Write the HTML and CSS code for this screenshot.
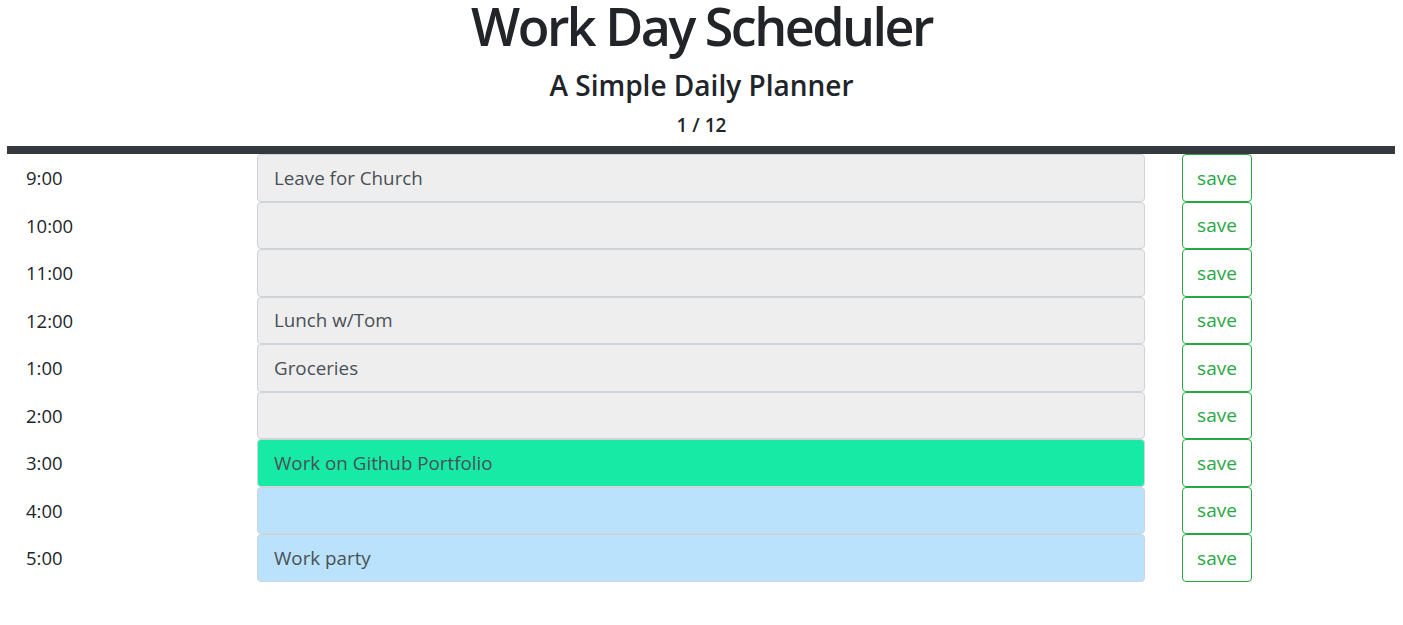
FILE: index.html
```html
<!DOCTYPE html>
<html lang="en">
<head>
<meta charset="utf-8">
<title>Work Day Scheduler</title>
<link rel="stylesheet" href="styles.css">
</head>
<body>
<header class="header">
  <h1 class="title">Work Day Scheduler</h1>
  <h2 class="subtitle">A Simple Daily Planner</h2>
  <p class="date">1 / 12</p>
</header>
<div class="divider"></div>
<main class="schedule">
  <div class="row"><div class="hour">9:00</div><div class="task past">Leave for Church</div><button class="save">save</button></div>
  <div class="row"><div class="hour">10:00</div><div class="task past"></div><button class="save">save</button></div>
  <div class="row"><div class="hour">11:00</div><div class="task past"></div><button class="save">save</button></div>
  <div class="row"><div class="hour">12:00</div><div class="task past">Lunch w/Tom</div><button class="save">save</button></div>
  <div class="row"><div class="hour">1:00</div><div class="task past">Groceries</div><button class="save">save</button></div>
  <div class="row"><div class="hour">2:00</div><div class="task past"></div><button class="save">save</button></div>
  <div class="row"><div class="hour">3:00</div><div class="task present">Work on Github Portfolio</div><button class="save">save</button></div>
  <div class="row"><div class="hour">4:00</div><div class="task future"></div><button class="save">save</button></div>
  <div class="row"><div class="hour">5:00</div><div class="task future">Work party</div><button class="save">save</button></div>
</main>
</body>
</html>
```
FILE: styles.css
```css
* { box-sizing: border-box; }
body {
  margin: 0;
  font-family: "Open Sans", "Noto Sans", sans-serif;
  color: #212529;
  background: #fff;
}
.header {
  text-align: center;
}
.title {
  margin: 0 0 6px;
  font-size: 52px;
  font-weight: 600;
  line-height: 52px;
  letter-spacing: -2.5px;
}
.subtitle {
  margin: 0;
  font-size: 28px;
  font-weight: 600;
  line-height: 54px;
}
.date {
  margin: 0;
  font-size: 19px;
  font-weight: 600;
  line-height: 26px;
  padding-bottom: 8px;
}
.divider {
  height: 8px;
  background: #343a40;
  margin: 0 8px 0 7px;
}
.schedule {
  display: flex;
  flex-direction: column;
}
.row {
  display: flex;
  align-items: stretch;
  height: 47.5px;
}
.hour {
  width: 257px;
  padding-left: 26px;
  display: flex;
  align-items: center;
  font-size: 18.5px;
  color: #212529;
}
.task {
  width: 888px;
  border: 1px solid #ced4da;
  border-radius: 4px;
  padding: 0 16px;
  display: flex;
  align-items: center;
  font-size: 18.8px;
  color: #495057;
}
.past { background: #eeeeee; }
.present { background: #17eaa5; }
.future { background: #bbe2fd; }
.save {
  margin-left: 37px;
  width: 70px;
  border: 1px solid #28a745;
  border-radius: 4px;
  background: #fff;
  color: #28a745;
  font-family: inherit;
  font-size: 19px;
  padding: 0;
}
```
